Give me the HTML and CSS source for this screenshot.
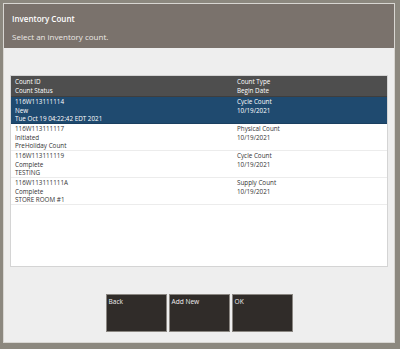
FILE: index.html
```html
<!DOCTYPE html>
<html>
<head>
<meta charset="utf-8">
<link rel="stylesheet" href="styles.css">
</head>
<body>
<div class="frame">
  <div class="header">
    <div class="title">Inventory Count</div>
    <div class="subtitle">Select an inventory count.</div>
  </div>
  <div class="body">
    <div class="panel">
      <div class="row head">
        <div class="c1">Count ID<br>Count Status</div>
        <div class="c2">Count Type<br>Begin Date</div>
      </div>
      <div class="row sel">
        <div class="c1">116W113111114<br>New<br>Tue Oct 19 04:22:42 EDT 2021</div>
        <div class="c2">Cycle Count<br>10/19/2021</div>
      </div>
      <div class="row">
        <div class="c1">116W113111117<br>Initiated<br>PreHoliday Count</div>
        <div class="c2">Physical Count<br>10/19/2021</div>
      </div>
      <div class="row">
        <div class="c1">116W113111119<br>Complete<br>TESTING</div>
        <div class="c2">Cycle Count<br>10/19/2021</div>
      </div>
      <div class="row">
        <div class="c1">116W113111111A<br>Complete<br>STORE ROOM #1</div>
        <div class="c2">Supply Count<br>10/19/2021</div>
      </div>
    </div>
    <div class="buttons">
      <div class="btn">Back</div>
      <div class="btn">Add New</div>
      <div class="btn">OK</div>
    </div>
  </div>
</div>
</body>
</html>
```
FILE: styles.css
```css
html, body { margin: 0; padding: 0; }
body {
  background: #8c887f;
  width: 400px;
  height: 349px;
  box-sizing: border-box;
  padding: 3px 5px 6px 3px;
  font-family: "Open Sans", "Noto Sans", sans-serif;
}
.frame {
  border: 1px solid #d8d6d2;
  height: 340px;
  box-sizing: border-box;
  display: flex;
  flex-direction: column;
}
.header {
  background: #7a726c;
  height: 44px;
  box-sizing: border-box;
  padding: 9px 0 0 8px;
  color: #fff;
}
.title {
  font-size: 8px;
  font-weight: 600;
  line-height: 11px;
}
.subtitle {
  font-size: 8px;
  line-height: 11px;
  margin-top: 7px;
  color: #ece9e6;
}
.body {
  flex: 1;
  background: #eeeeee;
  display: flex;
  flex-direction: column;
  padding: 27px 6px 0 6px;
}
.panel {
  background: #fff;
  border: 1px solid #d4d4d4;
  height: 192px;
  box-sizing: border-box;
}
.row {
  display: flex;
  height: 27px;
  box-sizing: border-box;
  border-bottom: 1px solid #ececec;
  font-size: 6.3px;
  line-height: 8.5px;
  color: #333;
  padding-top: 1px;
}
.row.head {
  height: 21px;
  background: #4e4e4e;
  color: #fff;
  border-bottom: 1px solid #3e3e3e;
  padding-top: 2px;
}
.row.sel {
  background: #1f4a6f;
  color: #fff;
  border-bottom: 1px solid #1a3f60;
}
.c1 { width: 222px; padding-left: 4px; }
.c2 { flex: 1; }
.buttons {
  display: flex;
  justify-content: center;
  gap: 2px;
  margin-top: 27px;
}
.btn {
  width: 61px;
  height: 38px;
  box-sizing: border-box;
  background: #302c29;
  border: 1px solid #8a8681;
  color: #eee;
  font-size: 6.6px;
  line-height: 9px;
  padding: 2px 0 0 2px;
}
```
